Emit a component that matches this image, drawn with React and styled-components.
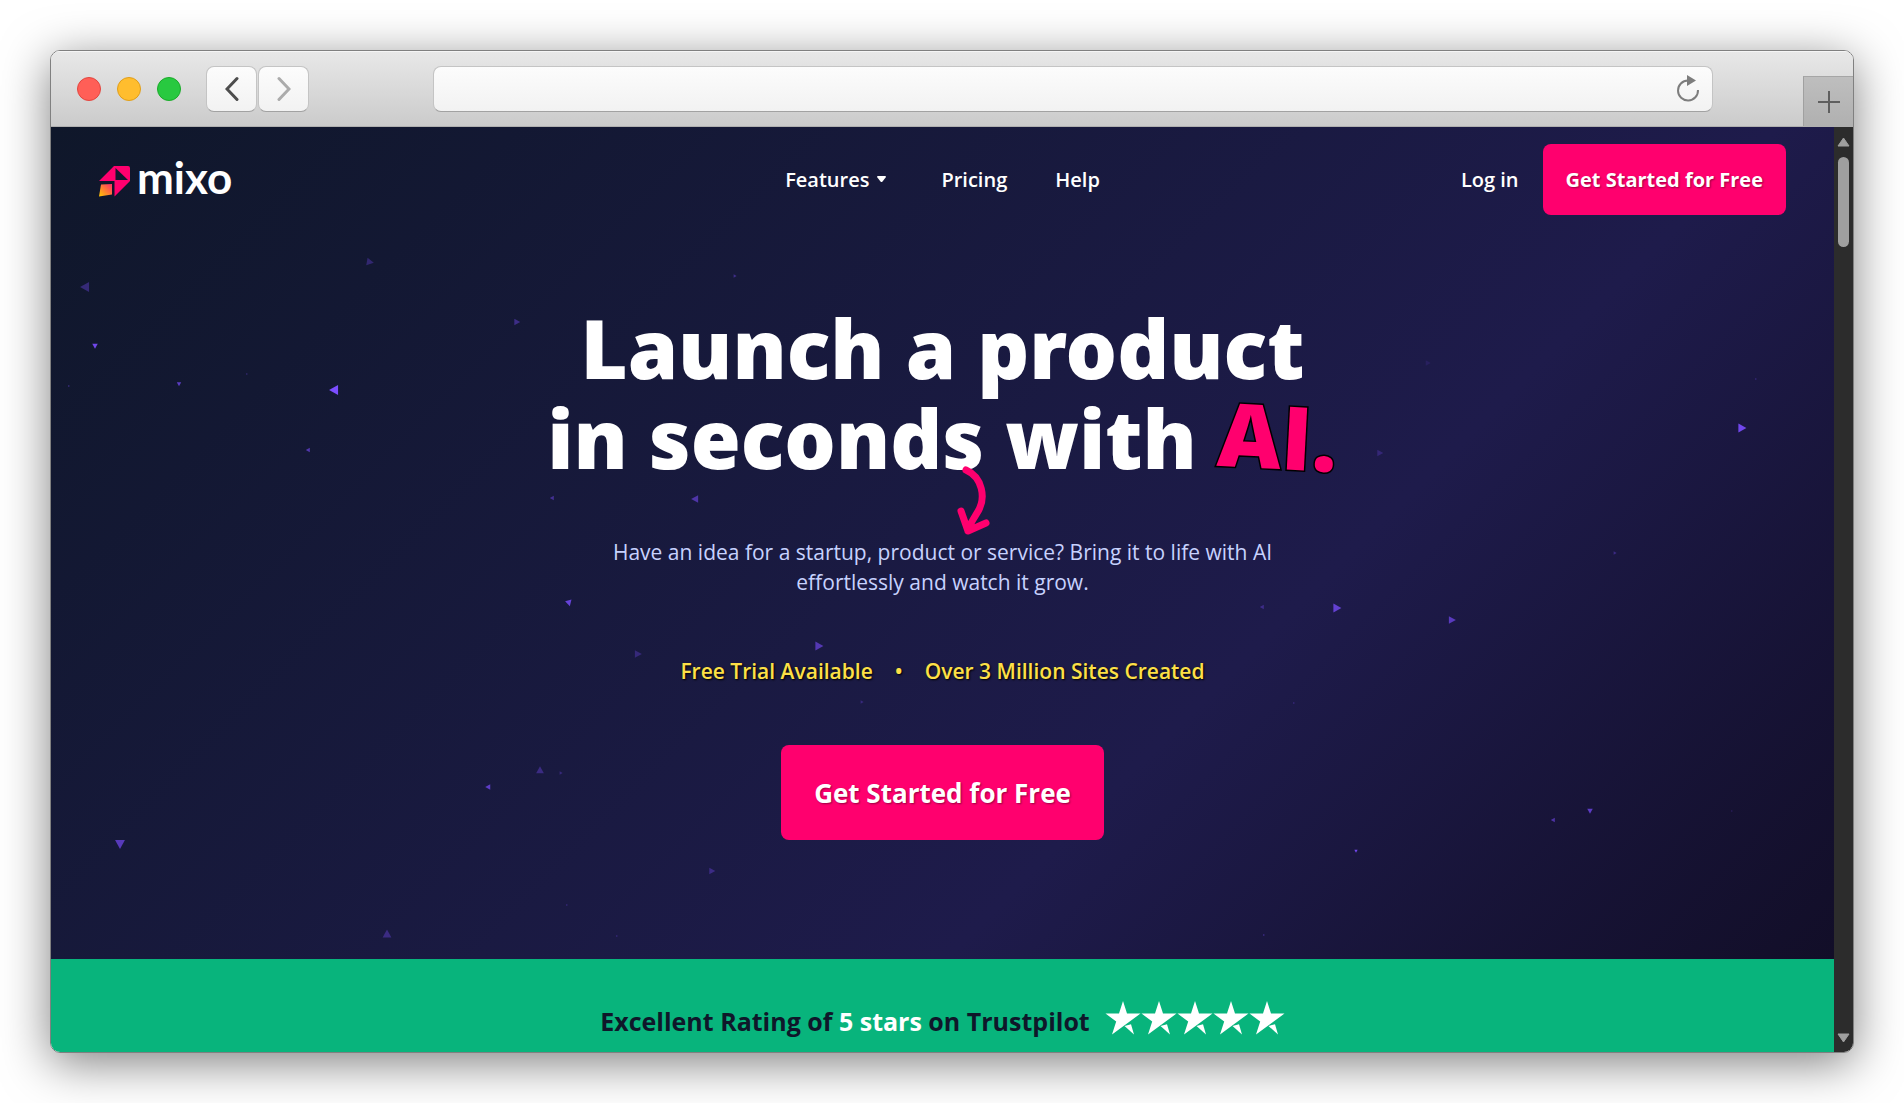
import React from "react";
import styled, { createGlobalStyle } from "styled-components";

// x, y, size, rotation, opacity
const particles = [
  [34, 160, 9, 180, 0.35],
  [44, 219, 5, 90, 0.9],
  [319, 135, 7, 10, 0.3],
  [466, 195, 6, 0, 0.4],
  [196, 247, 2, 0, 0.3],
  [18, 259, 2, 0, 0.4],
  [128, 257, 4, 90, 0.7],
  [283, 263, 9, 180, 1],
  [257, 323, 4, 180, 0.6],
  [501, 371, 4, 180, 0.45],
  [518, 476, 6, 75, 0.8],
  [684, 149, 3, 0, 0.4],
  [1691, 301, 8, 0, 0.9],
  [1329, 326, 6, 0, 0.25],
  [1377, 236, 5, 0, 0.12],
  [1705, 252, 2, 0, 0.3],
  [644, 372, 7, 180, 0.55],
  [1286, 481, 8, 0, 0.75],
  [1401, 493, 7, 0, 0.65],
  [1211, 480, 4, 180, 0.35],
  [1564, 426, 3, 0, 0.35],
  [768, 519, 8, 0, 0.6],
  [587, 527, 7, 0, 0.3],
  [811, 575, 3, 0, 0.3],
  [489, 643, 7, 270, 0.35],
  [510, 646, 3, 0, 0.3],
  [437, 660, 5, 180, 0.7],
  [69, 717, 9, 90, 0.65],
  [661, 744, 6, 0, 0.35],
  [336, 807, 8, 270, 0.35],
  [1539, 684, 5, 90, 0.7],
  [1502, 693, 4, 180, 0.55],
  [1305, 724, 3, 90, 0.9],
  [1213, 808, 2, 0, 0.4],
  [516, 778, 2, 0, 0.3],
  [566, 809, 2, 0, 0.3],
  [1243, 576, 2, 0, 0.3],
  [1681, 684, 2, 0, 0.2],
];

function Particles() {
  return (
    <ParticleField viewBox="0 0 1783 832" preserveAspectRatio="xMidYMid slice" aria-hidden="true">
      {particles.map(([x, y, size, angle, opacity]) => (
        <path
          key={`${x}-${y}`}
          d="M-.45 -.55 L.55 0 L-.45 .55 Z"
          fill="#7b4dff"
          opacity={opacity}
          transform={`translate(${x} ${y}) rotate(${angle}) scale(${size})`}
        />
      ))}
    </ParticleField>
  );
}

function Star() {
  return (
    <svg width="36" height="34" viewBox="0 0 36 34" aria-hidden="true">
      <path
        fill="#fff"
        d="M18 0 L22 12.5 L35.5 12.5 L24.7 20.6 L7 33.5 L11.2 20.6 L.5 12.5 L14 12.5 Z"
      />
      <path fill="#fff" d="M19.5 25 L26 23.2 L29 33.5 Z" />
    </svg>
  );
}

function Toolbar() {
  return (
    <Bar>
      <Lights>
        <Light $color="#ff5f57" $edge="#e2463f" />
        <Light $color="#ffbd2e" $edge="#e09e1a" />
        <Light $color="#28c940" $edge="#1aab29" />
      </Lights>
      <History>
        <HistoryButton aria-label="Back" $color="#4d4d4d">
          <svg width="14" height="26" viewBox="0 0 14 26">
            <path d="M12 2.5 L2 13 L12 23.5" />
          </svg>
        </HistoryButton>
        <HistoryButton aria-label="Forward" $color="#ababab">
          <svg width="14" height="26" viewBox="0 0 14 26">
            <path d="M2 2.5 L12 13 L2 23.5" />
          </svg>
        </HistoryButton>
      </History>
      <AddressBar>
        <AddressInput type="text" aria-label="Address" />
        <ReloadButton aria-label="Reload">
          <svg width="24" height="28" viewBox="0 0 24 28">
            <path d="M12 5.5 A10 10 0 1 0 22 15" fill="none" stroke="#7d7d7d" strokeWidth="2" />
            <path d="M11 0 L20 5.5 L11 11 Z" fill="#7d7d7d" />
          </svg>
        </ReloadButton>
      </AddressBar>
      <NewTab aria-label="New tab">
        <svg width="22" height="22" viewBox="0 0 22 22">
          <path d="M11 0 V22 M0 11 H22" stroke="#5f5f5f" strokeWidth="2" />
        </svg>
      </NewTab>
    </Bar>
  );
}

function Logo() {
  return (
    <LogoLink href="#">
      <svg width="32" height="32" viewBox="0 0 32 32" aria-hidden="true">
        <defs>
          <linearGradient id="flame" x1="0" y1="1" x2="1" y2="0">
            <stop offset="0" stopColor="#ffc800" />
            <stop offset="1" stopColor="#ff2d6b" />
          </linearGradient>
        </defs>
        <path fill="#ff006e" d="M15 1 H29 Q31 1 31 3 V16 L15.5 31.5 V16 H0 Z" />
        <path fill="#12172f" d="M16.5 3 L29 15 H16.5 Z" />
        <path fill="url(#flame)" d="M2 19.5 L13 19 V29.5 L0 31.5 Z" />
      </svg>
      mixo
    </LogoLink>
  );
}

function App() {
  return (
    <>
      <GlobalStyle />
      <Desktop>
        <Window>
          <Toolbar />
          <Viewport>
            <Page>
              <Hero>
                <Particles />
                <Header>
                  <Logo />
                  <Menu>
                    <MenuButton>
                      Features
                      <svg width="16" height="8" viewBox="0 0 16 8">
                        <path d="M0 1 Q0 0 1 0 H8 Q9 0 9 1 L5.5 5.5 Q4.5 6.5 3.5 5.5 Z" fill="#fff" />
                      </svg>
                    </MenuButton>
                    <MenuLink href="#">Pricing</MenuLink>
                    <MenuLink href="#">Help</MenuLink>
                  </Menu>
                  <Account>
                    <MenuLink href="#">Log in</MenuLink>
                    <Cta>Get Started for Free</Cta>
                  </Account>
                </Header>
                <Intro>
                  <Title>
                    Launch a product
                    <br />
                    in seconds with <Accent>AI.</Accent>
                    <Arrow width="34" height="72" viewBox="0 0 34 72" aria-hidden="true">
                      <path d="M9 5 C25 12 30 33 20 48 C16 55 12 60 11 66 M4 46 L11 66 L29 58" />
                    </Arrow>
                  </Title>
                  <Lead>
                    Have an idea for a startup, product or service? Bring it to life with AI
                    effortlessly and watch it grow.
                  </Lead>
                  <Perks>
                    <span>Free Trial Available</span>
                    <span>•</span>
                    <span>Over 3 Million Sites Created</span>
                  </Perks>
                  <Cta $large>Get Started for Free</Cta>
                </Intro>
              </Hero>
              <Rating>
                <RatingText>
                  Excellent Rating of <strong>5 stars</strong> on Trustpilot
                </RatingText>
                <Stars>
                  <Star />
                  <Star />
                  <Star />
                  <Star />
                  <Star />
                </Stars>
              </Rating>
            </Page>
            <Scrollbar>
              <svg width="13" height="10" viewBox="0 0 13 10">
                <path d="M6.5 1 L12 9 H1 Z" />
              </svg>
              <Thumb />
              <svg width="13" height="10" viewBox="0 0 13 10">
                <path d="M6.5 9 L1 1 H12 Z" />
              </svg>
            </Scrollbar>
          </Viewport>
        </Window>
      </Desktop>
    </>
  );
}

const GlobalStyle = createGlobalStyle`
  * {
    box-sizing: border-box;
    margin: 0;
    padding: 0;
  }
  body {
    background: #fff;
    font-family: "Open Sans", "Noto Sans", sans-serif;
  }
  button {
    border: none;
    background: none;
    font-family: inherit;
    cursor: pointer;
  }
  a {
    text-decoration: none;
  }
  svg {
    display: block;
    flex-shrink: 0;
  }
`;

const Desktop = styled.div`
  height: 100vh;
  padding: 50px;
`;

const Window = styled.div`
  display: flex;
  flex-direction: column;
  height: 100%;
  border: 1px solid #808080;
  border-radius: 10px;
  overflow: hidden;
  box-shadow: 0 10px 48px rgba(0, 0, 0, 0.5);
`;

const Bar = styled.div`
  display: flex;
  align-items: center;
  height: 76px;
  flex-shrink: 0;
  padding-left: 26px;
  background: linear-gradient(#e8e8e8, #cbcbcb);
  border-bottom: 1px solid #b0b0b0;
  box-shadow: inset 0 1px 0 #f5f5f5;
`;

const Lights = styled.div`
  display: flex;
  gap: 16px;
`;

const Light = styled.span`
  width: 24px;
  height: 24px;
  border-radius: 50%;
  background: ${(props) => props.$color};
  border: 1px solid ${(props) => props.$edge};
`;

const History = styled.div`
  display: flex;
  gap: 1px;
  margin-left: 25px;
`;

const HistoryButton = styled.button`
  display: flex;
  align-items: center;
  justify-content: center;
  width: 51px;
  height: 46px;
  border: 1px solid #c4c4c4;
  border-bottom-color: #a2a2a2;
  border-radius: 8px;
  background: linear-gradient(#fcfcfc, #f2f2f2);
  path {
    fill: none;
    stroke: ${(props) => props.$color};
    stroke-width: 3;
    stroke-linecap: round;
  }
`;

const AddressBar = styled.div`
  display: flex;
  align-items: center;
  flex: 1;
  height: 46px;
  margin: 0 90px 0 124px;
  padding-right: 12px;
  border: 1px solid #c4c4c4;
  border-bottom-color: #a2a2a2;
  border-radius: 8px;
  background: linear-gradient(#fcfcfc, #f2f2f2);
`;

const AddressInput = styled.input`
  flex: 1;
  height: 100%;
  padding: 0 16px;
  border: none;
  outline: none;
  background: transparent;
  font-size: 20px;
`;

const ReloadButton = styled.button`
  display: flex;
`;

const NewTab = styled.button`
  display: flex;
  align-items: center;
  justify-content: center;
  align-self: flex-end;
  width: 50px;
  height: 50px;
  padding-top: 1px;
  background: linear-gradient(#bebebe, #b0b0b0);
  border-top: 1px solid #a6a6a6;
  border-left: 1px solid #a0a0a0;
`;

const Viewport = styled.div`
  display: flex;
  flex: 1;
  min-height: 0;
`;

const Page = styled.main`
  flex: 1;
  overflow: hidden;
  background: #08b47c;
`;

const Hero = styled.section`
  position: relative;
  padding: 17px 48px 119px;
  background: linear-gradient(135deg, #0f172a, #1e1b4b 66%, #120e28);
`;

const ParticleField = styled.svg`
  position: absolute;
  inset: 0;
  width: 100%;
  height: 100%;
`;

const Header = styled.header`
  position: relative;
  display: grid;
  grid-template-columns: 1fr auto 1fr;
  align-items: center;
`;

const LogoLink = styled.a`
  display: flex;
  align-items: flex-end;
  gap: 6px;
  margin-bottom: 5px;
  color: #fff;
  font-family: Lato, sans-serif;
  font-size: 44px;
  font-weight: 700;
  line-height: 40px;
`;

const Menu = styled.nav`
  display: flex;
  align-items: center;
  gap: 48px;
`;

const MenuLink = styled.a`
  color: #fff;
  font-size: 20px;
  font-weight: 600;
  line-height: 30px;
`;

const MenuButton = styled(MenuLink).attrs({ as: "button" })`
  display: flex;
  align-items: center;
  gap: 8px;
`;

const Account = styled.div`
  display: flex;
  align-items: center;
  justify-content: flex-end;
  gap: 24px;
`;

const Cta = styled.button`
  padding: ${(props) => (props.$large ? "31px 33px 29px" : "20px 23px")};
  border-radius: 8px;
  background: #ff006e;
  color: #fff;
  font-size: ${(props) => (props.$large ? "26px" : "20px")};
  font-weight: 700;
  line-height: ${(props) => (props.$large ? "35px" : "31px")};
  text-shadow: 1px 1px 2px rgba(0, 0, 0, 0.4);
`;

const Intro = styled.div`
  position: relative;
  display: flex;
  flex-direction: column;
  align-items: center;
  padding-top: 88px;
  text-align: center;
`;

const Title = styled.h1`
  position: relative;
  color: #fff;
  font-family: "Noto Sans", "Open Sans", sans-serif;
  font-size: 81px;
  font-weight: 900;
  line-height: 90px;
`;

const Accent = styled.span`
  display: inline-block;
  color: #ff006e;
  font-family: "Open Sans", sans-serif;
  font-size: 88px;
  font-weight: 800;
  line-height: 84px;
  -webkit-text-stroke: 3px #000;
  paint-order: stroke fill;
  transform: rotate(3deg);
`;

const Arrow = styled.svg`
  position: absolute;
  left: calc(50% + 15px);
  top: 162px;
  path {
    fill: none;
    stroke: #ff006e;
    stroke-width: 7;
    stroke-linecap: round;
    stroke-linejoin: round;
  }
`;

const Lead = styled.p`
  max-width: 700px;
  margin-top: 54px;
  color: #c7d2fe;
  font-size: 21px;
  line-height: 30px;
`;

const Perks = styled.div`
  display: flex;
  gap: 22px;
  margin: 59px 0;
  color: #fde047;
  font-size: 21px;
  font-weight: 600;
  line-height: 30px;
  text-shadow: 1px 1px 2px #000;
`;

const Rating = styled.section`
  display: flex;
  align-items: center;
  justify-content: center;
  gap: 15px;
  padding: 36px 48px;
  color: #0f172a;
  font-size: 25px;
  font-weight: 700;
  line-height: 40px;
  strong {
    color: #fff;
    font-weight: inherit;
  }
`;

const RatingText = styled.p`
  padding-top: 6px;
`;

const Stars = styled.div`
  display: flex;
`;

const Scrollbar = styled.div`
  display: flex;
  flex-direction: column;
  align-items: center;
  width: 19px;
  padding: 10px 0 9px;
  background: #2c2c2c;
  path {
    fill: #9f9f9f;
    stroke: #9f9f9f;
    stroke-width: 1;
    stroke-linejoin: round;
  }
`;

const Thumb = styled.div`
  width: 11px;
  height: 90px;
  margin: 10px 0 auto;
  border-radius: 6px;
  background: #9f9f9f;
`;

export default App;
